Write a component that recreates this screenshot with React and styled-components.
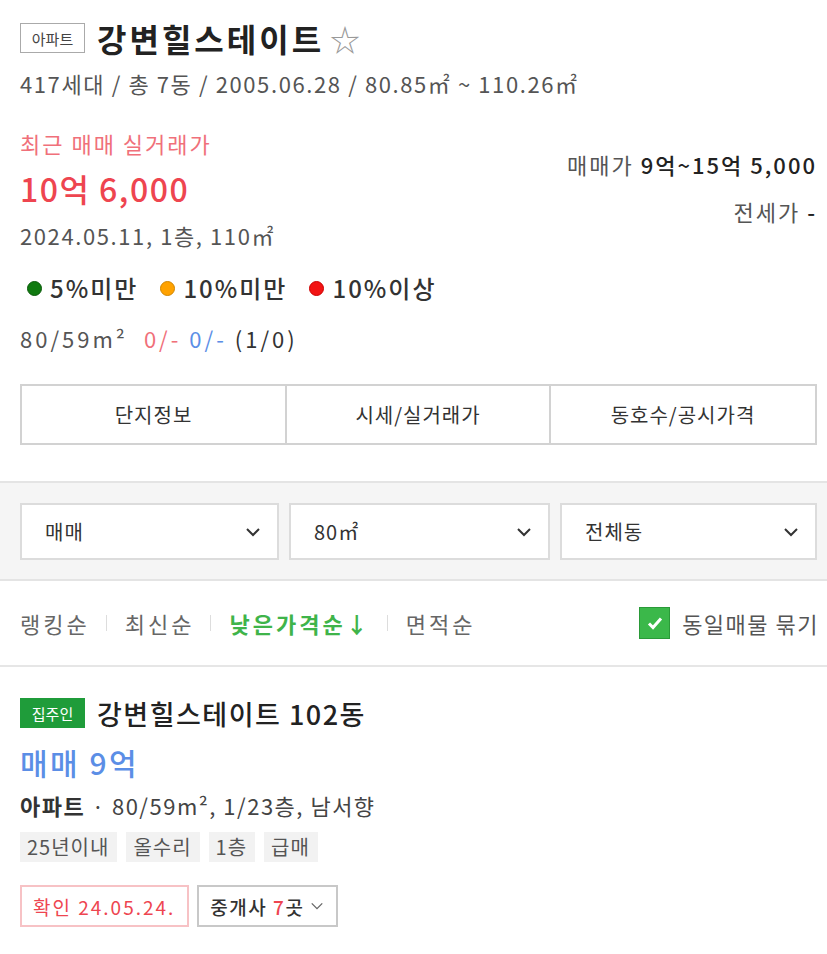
import React from 'react';
import styled, { createGlobalStyle } from 'styled-components';

const GlobalStyle = createGlobalStyle`
  body {
    margin: 0;
    background: #fff;
    font-family: "Noto Sans CJK KR", "Noto Sans", sans-serif;
    color: #222;
  }
  * { box-sizing: border-box; }
`;

const Page = styled.div`
  width: 827px;
`;

const Header = styled.section`
  padding: 22px 10px 0 20px;
`;

const TitleRow = styled.div`
  display: flex;
  align-items: center;
  height: 32px;
`;

const TypeTag = styled.span`
  display: inline-flex;
  align-items: center;
  justify-content: center;
  width: 65px;
  height: 30px;
  border: 1px solid #aaa;
  font-size: 15px;
  color: #444;
  margin-right: 12px;
`;

const Title = styled.h1`
  margin: 0;
  font-size: 32px;
  font-weight: 700;
  line-height: 32px;
  color: #222;
  letter-spacing: 3px;
`;

const Star = styled.span`
  margin-left: 6px;
  font-size: 30px;
  color: #999;
  line-height: 1;
`;

const TextLine = styled.div`
  font-size: 22px;
  line-height: 28px;
  color: ${(p) => p.color || '#555'};
  letter-spacing: ${(p) => p.spacing ?? 2}px;
`;

const Meta = styled(TextLine)`
  margin-top: 15px;
`;

const PriceArea = styled.div`
  display: flex;
  justify-content: space-between;
  margin-top: 32px;
`;

const PriceLeft = styled.div`
  display: flex;
  flex-direction: column;
`;

const RecentPrice = styled.div`
  margin-top: 13px;
  font-size: 32px;
  line-height: 36px;
  color: #ee4550;
  font-weight: 500;
  letter-spacing: 1.5px;
`;

const RecentInfo = styled(TextLine)`
  margin-top: 15px;
`;

const PriceRight = styled.div`
  display: flex;
  flex-direction: column;
  align-items: flex-end;
  padding-top: 21px;
  gap: 19px;
  b {
    color: #222;
    font-weight: 500;
  }
`;

const Legend = styled.div`
  display: flex;
  align-items: center;
  gap: 22px;
  margin-top: 25px;
  padding-left: 7px;
`;

const LegendItem = styled.span`
  display: inline-flex;
  align-items: center;
  gap: 8px;
  font-size: 24px;
  line-height: 28px;
  font-weight: 500;
  color: #333;
  letter-spacing: 2px;
`;

const Dot = styled.span`
  width: 15px;
  height: 15px;
  border-radius: 50%;
  background: ${(p) => p.color};
  border: 1px solid ${(p) => p.edge};
`;

const SizeRow = styled(TextLine)`
  display: flex;
  align-items: baseline;
  margin-top: 22px;
`;

const Stat = styled.span`
  color: ${(p) => p.color};
  margin-left: ${(p) => p.gap || 8}px;
`;

const Tabs = styled.div`
  display: grid;
  grid-template-columns: 263px 264px 1fr;
  margin-top: 32px;
  border: 2px solid #d2d2d2;
  height: 61px;
`;

const Tab = styled.div`
  display: flex;
  align-items: center;
  justify-content: center;
  font-size: 20px;
  letter-spacing: 1px;
  color: #333;
  border-left: ${(p) => (p.first ? 'none' : '2px solid #d2d2d2')};
`;

const FilterBand = styled.section`
  margin-top: 36px;
  background: #f5f5f5;
  border-top: 2px solid #e4e4e4;
  border-bottom: 2px solid #e4e4e4;
  padding: 20px 10px 19px 20px;
  display: grid;
  grid-template-columns: 259px 261px 1fr;
  gap: 10px;
`;

const Select = styled.div`
  height: 57px;
  background: #fff;
  border: 2px solid #dcdcdc;
  display: flex;
  align-items: center;
  justify-content: space-between;
  padding: 0 16px 0 23px;
  font-size: 20px;
  letter-spacing: 1px;
  color: #333;
`;

const SortRow = styled.section`
  display: flex;
  align-items: center;
  justify-content: space-between;
  height: 86px;
  padding: 0 8px 0 20px;
  border-bottom: 2px solid #e6e6e6;
`;

const SortList = styled.div`
  display: flex;
  align-items: center;
`;

const SortItem = styled.span`
  font-size: 22px;
  color: ${(p) => (p.active ? '#3fb44a' : '#666')};
  font-weight: ${(p) => (p.active ? 700 : 400)};
  letter-spacing: 3px;
`;

const SortDivider = styled.span`
  width: 1px;
  height: 16px;
  background: #ddd;
  margin: 0 18px 0 16px;
`;

const Check = styled.label`
  display: flex;
  align-items: center;
  gap: 12px;
  font-size: 22px;
  color: #555;
  letter-spacing: 1.5px;
`;

const CheckBox = styled.span`
  width: 31px;
  height: 32px;
  background: #3bb84a;
  border: 1px solid #2a9a38;
  display: flex;
  align-items: center;
  justify-content: center;
`;

const Listing = styled.article`
  padding: 31px 10px 0 20px;
`;

const ListTitleRow = styled.div`
  display: flex;
  align-items: center;
  height: 30px;
`;

const OwnerTag = styled.span`
  display: inline-flex;
  align-items: center;
  justify-content: center;
  width: 65px;
  height: 30px;
  background: #1f9c3a;
  color: #fff;
  font-size: 15px;
  margin-right: 12px;
`;

const ListTitle = styled.div`
  font-size: 27px;
  font-weight: 500;
  color: #222;
  letter-spacing: 1.5px;
`;

const ListPrice = styled.div`
  margin-top: 16px;
  font-size: 30px;
  line-height: 36px;
  font-weight: 500;
  color: #5b8ee6;
  letter-spacing: 2.5px;
`;

const ListDetail = styled(TextLine)`
  margin-top: 11px;
  color: #444;
  letter-spacing: 1.5px;
  b {
    font-weight: 700;
    color: #333;
  }
`;

const TagRow = styled.div`
  display: flex;
  gap: 9px;
  margin-top: 13px;
`;

const Chip = styled.span`
  background: #f2f2f2;
  color: #555;
  font-size: 20px;
  letter-spacing: 1px;
  height: 30px;
  line-height: 30px;
  padding: 0 8px 0 7px;
`;

const ButtonRow = styled.div`
  display: flex;
  gap: 8px;
  margin-top: 23px;
`;

const OutlineButton = styled.span`
  display: inline-flex;
  align-items: center;
  gap: 6px;
  height: 42px;
  padding: 0 12px 0 11px;
  border: 2px solid ${(p) => p.border};
  color: ${(p) => p.color};
  font-size: 19px;
  letter-spacing: ${(p) => p.spacing}px;
  font-weight: ${(p) => p.weight || 400};
  em {
    font-style: normal;
    color: #ee4550;
  }
`;

const Chevron = ({ size = 16, color = '#333', width = 2 }) => (
  <svg width={size} height={size} viewBox="0 0 16 16" fill="none">
    <path d="M2 5l6 6 6-6" stroke={color} strokeWidth={width} />
  </svg>
);

export default function App() {
  return (
    <Page>
      <GlobalStyle />
      <Header>
        <TitleRow>
          <TypeTag>아파트</TypeTag>
          <Title>강변힐스테이트</Title>
          <Star>☆</Star>
        </TitleRow>
        <Meta spacing={1.6}>417세대 / 총 7동 / 2005.06.28 / 80.85㎡ ~ 110.26㎡</Meta>
        <PriceArea>
          <PriceLeft>
            <TextLine color="#f0707a">최근 매매 실거래가</TextLine>
            <RecentPrice>10억 6,000</RecentPrice>
            <RecentInfo spacing={1.6}>2024.05.11, 1층, 110㎡</RecentInfo>
          </PriceLeft>
          <PriceRight>
            <TextLine>
              매매가 <b>9억~15억 5,000</b>
            </TextLine>
            <TextLine>
              전세가 <b>-</b>
            </TextLine>
          </PriceRight>
        </PriceArea>
        <Legend>
          <LegendItem>
            <Dot color="#107a10" edge="#0a5a0a" />
            5%미만
          </LegendItem>
          <LegendItem>
            <Dot color="#ffa200" edge="#d08500" />
            10%미만
          </LegendItem>
          <LegendItem>
            <Dot color="#f21414" edge="#c00" />
            10%이상
          </LegendItem>
        </Legend>
        <SizeRow spacing={3}>
          80/59m²
          <Stat color="#f0707a" gap={16}>0/-</Stat>
          <Stat color="#5b8ee6">0/-</Stat>
          <Stat color="#333">(1/0)</Stat>
        </SizeRow>
        <Tabs>
          <Tab first>단지정보</Tab>
          <Tab>시세/실거래가</Tab>
          <Tab>동호수/공시가격</Tab>
        </Tabs>
      </Header>

      <FilterBand>
        <Select>
          매매
          <Chevron />
        </Select>
        <Select>
          80㎡
          <Chevron />
        </Select>
        <Select>
          전체동
          <Chevron />
        </Select>
      </FilterBand>

      <SortRow>
        <SortList>
          <SortItem>랭킹순</SortItem>
          <SortDivider />
          <SortItem>최신순</SortItem>
          <SortDivider />
          <SortItem active>낮은가격순↓</SortItem>
          <SortDivider />
          <SortItem>면적순</SortItem>
        </SortList>
        <Check>
          <CheckBox>
            <svg width="18" height="18" viewBox="0 0 18 18" fill="none">
              <path d="M3 9.5l4 4 8-9" stroke="#fff" strokeWidth="3" />
            </svg>
          </CheckBox>
          동일매물 묶기
        </Check>
      </SortRow>

      <Listing>
        <ListTitleRow>
          <OwnerTag>집주인</OwnerTag>
          <ListTitle>강변힐스테이트 102동</ListTitle>
        </ListTitleRow>
        <ListPrice>매매 9억</ListPrice>
        <ListDetail>
          <b>아파트</b> · 80/59m², 1/23층, 남서향
        </ListDetail>
        <TagRow>
          <Chip>25년이내</Chip>
          <Chip>올수리</Chip>
          <Chip>1층</Chip>
          <Chip>급매</Chip>
        </TagRow>
        <ButtonRow>
          <OutlineButton border="#f7c2c5" color="#ee4550" spacing={2}>
            확인 24.05.24.
          </OutlineButton>
          <OutlineButton border="#c8c8c8" color="#333" weight={500} spacing={1.5}>
            <span>
              중개사 <em>7</em>곳
            </span>
            <Chevron size={14} color="#666" width={1.5} />
          </OutlineButton>
        </ButtonRow>
      </Listing>
    </Page>
  );
}
